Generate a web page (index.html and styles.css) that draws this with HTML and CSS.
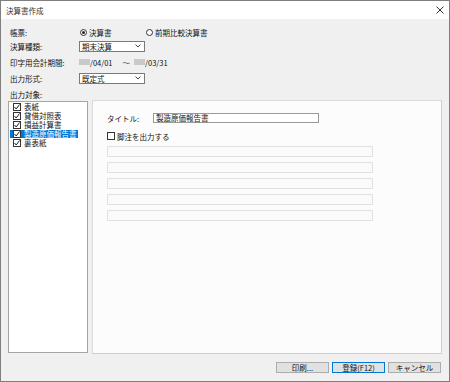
FILE: index.html
```html
<!DOCTYPE html>
<html lang="ja">
<head>
    <meta charset="UTF-8">
    <title>決算書作成</title>
    <link rel="stylesheet" href="styles.css">
</head>
<body>
    <div class="window">
        <div class="titlebar">
            <span class="title">決算書作成</span>
            <svg class="close" width="8" height="8" viewBox="0 0 8 8">
                <path d="M0.5 0.5 L7.5 7.5 M7.5 0.5 L0.5 7.5" stroke="#333" stroke-width="1"/>
            </svg>
        </div>

        <div class="form">
            <div class="row first">
                <label>帳票:</label>
                <div class="radios">
                    <span class="opt"><span class="radio on"></span>決算書</span>
                    <span class="opt"><span class="radio"></span>前期比較決算書</span>
                </div>
            </div>
            <div class="row">
                <label>決算種類:</label>
                <div class="select">
                    <span>期末決算</span>
                    <svg width="6" height="4" viewBox="0 0 6 4"><path d="M0.5 0.5 L3 3 L5.5 0.5" fill="none" stroke="#444"/></svg>
                </div>
            </div>
            <div class="row">
                <label>印字用会計期間:</label>
                <div class="period">
                    <span class="blur"></span><span>/04/01</span>
                    <span class="tilde">～</span>
                    <span class="blur"></span><span>/03/31</span>
                </div>
            </div>
            <div class="row">
                <label>出力形式:</label>
                <div class="select">
                    <span>既定式</span>
                    <svg width="6" height="4" viewBox="0 0 6 4"><path d="M0.5 0.5 L3 3 L5.5 0.5" fill="none" stroke="#444"/></svg>
                </div>
            </div>
            <div class="row">
                <label>出力対象:</label>
            </div>
        </div>

        <div class="main">
            <ul class="tree">
                <li><span class="item"><span class="check"></span>表紙</span></li>
                <li><span class="item"><span class="check"></span>貸借対照表</span></li>
                <li><span class="item"><span class="check"></span>損益計算書</span></li>
                <li><span class="item selected"><span class="check"></span>製造原価報告書</span></li>
                <li><span class="item"><span class="check"></span>裏表紙</span></li>
            </ul>

            <div class="panel">
                <div class="title-row">
                    <label>タイトル:</label>
                    <div class="input">製造原価報告書</div>
                </div>
                <div class="footnote">
                    <span class="box"></span>脚注を出力する
                </div>
                <div class="lines">
                    <div class="line"></div>
                    <div class="line"></div>
                    <div class="line"></div>
                    <div class="line"></div>
                    <div class="line"></div>
                </div>
            </div>
        </div>

        <div class="buttons">
            <button>印刷...</button>
            <button class="default">登録(F12)</button>
            <button>キャンセル</button>
        </div>
    </div>
</body>
</html>
```

FILE: styles.css
```css
body {
    margin: 0;
    font-family: "Noto Sans CJK JP", "Noto Sans", sans-serif;
    font-size: 7.5px;
    line-height: 9px;
    color: #111;
}
.window {
    width: 450px;
    height: 382px;
    box-sizing: border-box;
    border: 1px solid #7f7f7f;
    background-color: #f0f0f0;
}
.titlebar {
    height: 18px;
    background: white;
    display: flex;
    align-items: center;
    justify-content: space-between;
    padding: 0 5px;
}
.title {
    color: #333;
}

/* 上部フォーム */
.form {
    padding: 7px 0 0 9px;
    display: flex;
    flex-direction: column;
    gap: 4px;
}
.row {
    height: 12px;
    display: flex;
    align-items: center;
}
.row.first {
    margin-bottom: -2px;
}
.row label {
    width: 69px;
    flex-shrink: 0;
}
.radios {
    display: flex;
    padding-left: 1px;
}
.opt {
    display: flex;
    align-items: center;
    gap: 2px;
    width: 66px;
}
.radio {
    width: 7px;
    height: 7px;
    box-sizing: border-box;
    border: 1px solid #333;
    border-radius: 50%;
    background: white;
    position: relative;
}
.radio.on::after {
    content: "";
    position: absolute;
    left: 1px;
    top: 1px;
    width: 3px;
    height: 3px;
    border-radius: 50%;
    background: #222;
}
.select {
    width: 66px;
    height: 11px;
    box-sizing: border-box;
    border: 1px solid #7a7a7a;
    background: white;
    display: flex;
    align-items: center;
    justify-content: space-between;
    padding: 0 3px 0 2px;
}
.period {
    display: flex;
    align-items: center;
}
.blur {
    width: 11px;
    height: 6px;
    background: #c9c9c9;
}
.tilde {
    margin: 0 4px 0 10px;
    color: #333;
}

/* 出力対象 + 設定パネル */
.main {
    display: flex;
    padding-left: 7px;
}
.tree {
    list-style: none;
    margin: 1px 4px 0 0;
    padding: 0;
    width: 80px;
    height: 252px;
    box-sizing: border-box;
    border: 1px solid #a5a5a5;
    background: white;
}
.tree li {
    height: 9px;
    line-height: 8px;
    padding-left: 1px;
    display: flex;
    align-items: center;
}
.item {
    display: inline-flex;
    align-items: center;
    height: 8px;
    line-height: 8px;
    padding: 0 1px 0 3px;
    gap: 3px;
}
.item.selected {
    background: #0078d7;
    color: white;
}
.check {
    width: 8px;
    height: 8px;
    box-sizing: border-box;
    border: 1px solid #333;
    background: white url("data:image/svg+xml;utf8,<svg xmlns='http://www.w3.org/2000/svg' width='6' height='6' viewBox='0 0 6 6'><path d='M0.5 3 L2.2 5 L5.5 0.5' fill='none' stroke='%23222' stroke-width='1'/></svg>") no-repeat center;
}
.panel {
    width: 350px;
    height: 254px;
    box-sizing: border-box;
    border: 1px solid #dadada;
    border-right-color: #cfcfcf;
    border-bottom-color: #cfcfcf;
    background: #fdfcfc;
    padding: 12px 0 0 14px;
}
.title-row {
    display: flex;
    align-items: center;
    height: 10px;
}
.title-row label {
    width: 46px;
}
.input {
    width: 166px;
    height: 10px;
    box-sizing: border-box;
    border: 1px solid #9a9a9a;
    background: white;
    padding-left: 2px;
    line-height: 8px;
}
.footnote {
    display: flex;
    align-items: center;
    gap: 2px;
    height: 8px;
    margin-top: 9px;
}
.box {
    width: 8px;
    height: 8px;
    box-sizing: border-box;
    border: 1px solid #333;
    background: white;
}
.lines {
    margin-top: 6px;
    display: flex;
    flex-direction: column;
    gap: 5px;
}
.line {
    width: 266px;
    height: 11px;
    box-sizing: border-box;
    border: 1px solid #e1e1e1;
    background: #fbfbfb;
}

/* ボタン */
.buttons {
    display: flex;
    justify-content: flex-end;
    gap: 3px;
    padding-right: 8px;
    margin-top: 8px;
}
button {
    width: 53px;
    height: 11px;
    box-sizing: border-box;
    border: 1px solid #adadad;
    background-color: #e1e1e1;
    font-family: inherit;
    font-size: 7.5px;
    color: #111;
    padding: 0;
    line-height: 9px;
}
button.default {
    border-color: #0078d7;
}
```
